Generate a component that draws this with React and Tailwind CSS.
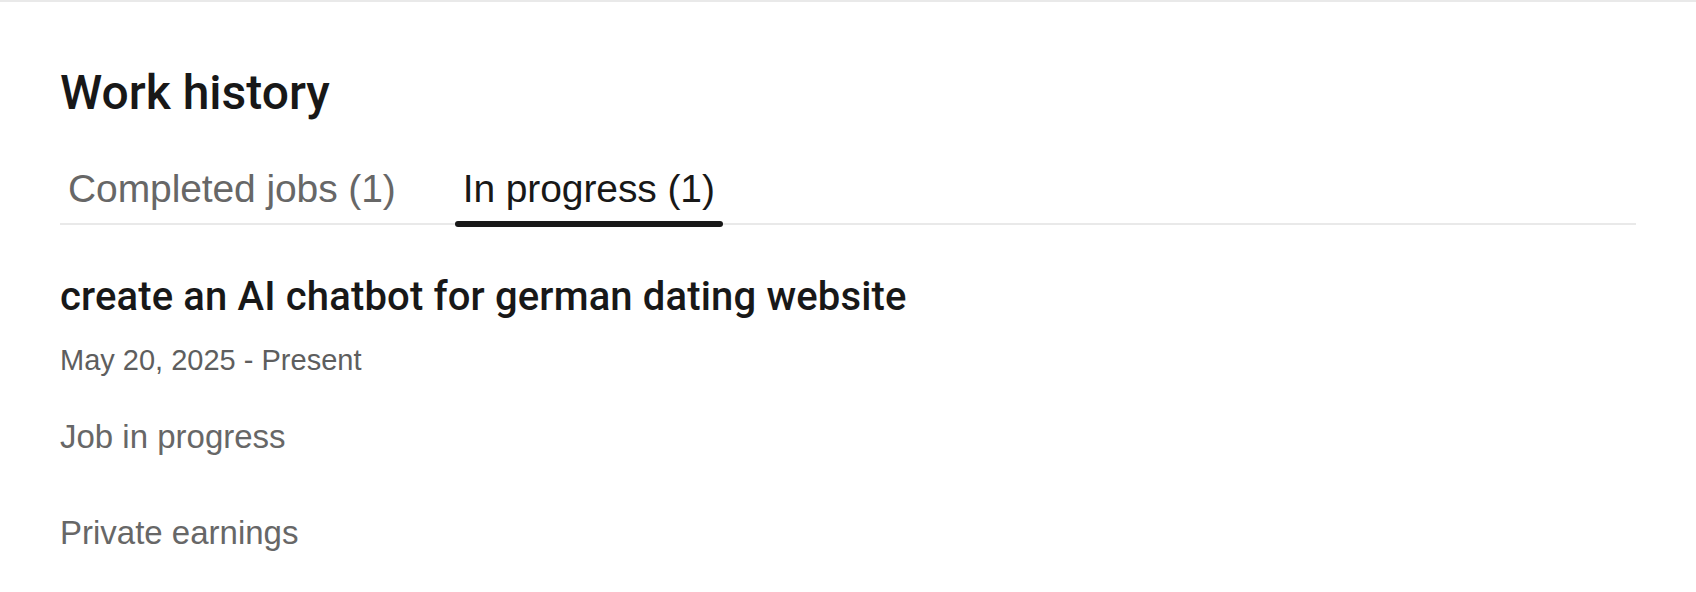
import React, { useState } from 'react';

const tabs = [
    { id: 'completed', label: 'Completed jobs (1)' },
    { id: 'progress', label: 'In progress (1)' },
];

const App = () => {
    const [activeTab, setActiveTab] = useState('progress');

    return (
        <div className="min-h-screen bg-white border-t-2 border-[#e9e9e9] font-['Liberation_Sans',Arial,sans-serif]">
            <div className="px-[60px] pt-[62px]">
                <h2 className="text-[48px] leading-[58px] font-medium text-[#181818] font-['Roboto',sans-serif]">
                    Work history
                </h2>

                {/* Tabs */}
                <div className="mt-[43px] flex gap-[51px] border-b-2 border-[#e9e9e9]">
                    {tabs.map((tab) => (
                        <button
                            key={tab.id}
                            onClick={() => setActiveTab(tab.id)}
                            className={`relative px-2 pb-[10px] text-[39px] leading-[48px] tracking-[-0.1px] ${
                                activeTab === tab.id ? 'text-[#181818]' : 'text-[#676767]'
                            }`}
                        >
                            {tab.label}
                            {activeTab === tab.id && (
                                <span className="absolute left-0 right-0 -bottom-[4px] h-[6px] rounded-full bg-[#181818]" />
                            )}
                        </button>
                    ))}
                </div>

                {/* Job */}
                <div className="mt-[48px]">
                    <h3 className="text-[40px] leading-[48px] font-medium text-[#181818] font-['Roboto',sans-serif] tracking-[0.15px]">
                        create an AI chatbot for german dating website
                    </h3>
                    <p className="mt-[19px] text-[29px] leading-[40px] text-[#5e5e5e]">
                        May 20, 2025 - Present
                    </p>
                    <p className="mt-[35px] text-[33px] leading-[44px] text-[#676767]">
                        Job in progress
                    </p>
                    <p className="mt-[52px] text-[33px] leading-[44px] text-[#676767]">
                        Private earnings
                    </p>
                </div>
            </div>
        </div>
    );
};

export default App;
